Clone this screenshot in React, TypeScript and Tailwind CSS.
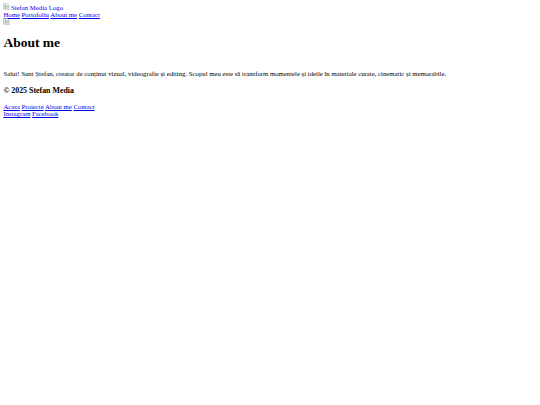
const link = "text-[#0000ee] underline";

const BrokenImage = () => (
  <svg width="7" height="7" viewBox="0 0 16 16" className="inline-block align-baseline">
    <path d="M1 1h9l4 4v4l-2 2-2-2-3 3-2-2-4 4z" fill="#f4f4f4" stroke="#9a9a9a" strokeWidth="1" />
    <path d="M3 10l3-3 2 2 3-3 2 2" fill="none" stroke="#3c9b3c" strokeWidth="1.5" />
    <circle cx="5" cy="5" r="1.3" fill="#4a7fd0" />
    <path d="M3 15l4-4 2 2 3-3 3 3v2z" fill="#e8e8e8" stroke="#9a9a9a" strokeWidth="1" />
  </svg>
);

export default function App() {
  return (
    <div className="p-[3.4px] font-['Liberation_Serif',serif] text-[6.75px] leading-[normal] text-black">
      <header>
        <a href="#" className={link}>
          <span className="inline-flex items-baseline gap-[0.5px]">
            <BrokenImage />
            <span>Stefan Media Logo</span>
          </span>
        </a>
        <nav>
          <a href="#" className={link}>Home</a>{" "}
          <a href="#" className={link}>Portofoliu</a>{" "}
          <a href="#" className={link}>About me</a>{" "}
          <a href="#" className={link}>Contact</a>
        </nav>
        <div className="h-[7.8px]">
          <BrokenImage />
        </div>
      </header>

      <main>
        <section>
          <h1 className="mt-[9px] mb-[19px] text-[13.5px] font-bold leading-[normal]">About me</h1>
          <p className="my-[6.75px]">
            Salut! Sunt Ștefan, creator de conținut vizual, videografie și editing. Scopul meu este să
            transform momentele și ideile în materiale curate, cinematic și memorabile.
          </p>
        </section>
      </main>

      <footer>
        <h3 className="mt-[8.9px] mb-[7.9px] text-[7.9px] font-bold leading-[normal]">© 2025 Stefan Media</h3>
        <nav>
          <a href="#" className={link}>Acasa</a>{" "}
          <a href="#" className={link}>Proiecte</a>{" "}
          <a href="#" className={link}>About me</a>{" "}
          <a href="#" className={link}>Contact</a>
        </nav>
        <div>
          <a href="#" className={link}>Instagram</a>{" "}
          <a href="#" className={link}>Facebook</a>
        </div>
      </footer>
    </div>
  );
}
